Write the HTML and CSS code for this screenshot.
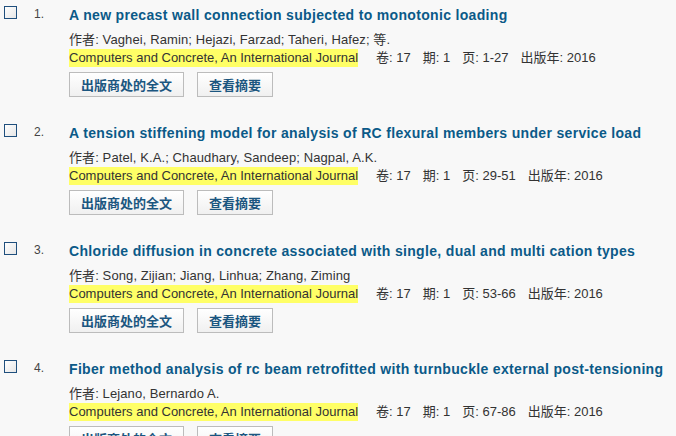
FILE: index.html
```html
<!DOCTYPE html>
<html lang="zh">
<head>
<meta charset="utf-8">
<title>Results</title>
<link rel="stylesheet" href="styles.css">
</head>
<body>
<ul class="results">
  <li class="item">
    <span class="box"></span>
    <span class="num">1.</span>
    <div class="body">
      <a class="title" href="#">A new precast wall connection subjected to monotonic loading</a>
      <div class="authors">作者: Vaghei, Ramin; Hejazi, Farzad; Taheri, Hafez; 等.</div>
      <div class="source"><span class="journal">Computers and Concrete, An International Journal</span><span class="meta">卷: 17</span><span class="meta">期: 1</span><span class="meta">页: 1-27</span><span class="meta">出版年: 2016</span></div>
      <div class="actions"><button class="btn">出版商处的全文</button><button class="btn">查看摘要</button></div>
    </div>
  </li>
  <li class="item">
    <span class="box"></span>
    <span class="num">2.</span>
    <div class="body">
      <a class="title" href="#">A tension stiffening model for analysis of RC flexural members under service load</a>
      <div class="authors">作者: Patel, K.A.; Chaudhary, Sandeep; Nagpal, A.K.</div>
      <div class="source"><span class="journal">Computers and Concrete, An International Journal</span><span class="meta">卷: 17</span><span class="meta">期: 1</span><span class="meta">页: 29-51</span><span class="meta">出版年: 2016</span></div>
      <div class="actions"><button class="btn">出版商处的全文</button><button class="btn">查看摘要</button></div>
    </div>
  </li>
  <li class="item">
    <span class="box"></span>
    <span class="num">3.</span>
    <div class="body">
      <a class="title" href="#">Chloride diffusion in concrete associated with single, dual and multi cation types</a>
      <div class="authors">作者: Song, Zijian; Jiang, Linhua; Zhang, Ziming</div>
      <div class="source"><span class="journal">Computers and Concrete, An International Journal</span><span class="meta">卷: 17</span><span class="meta">期: 1</span><span class="meta">页: 53-66</span><span class="meta">出版年: 2016</span></div>
      <div class="actions"><button class="btn">出版商处的全文</button><button class="btn">查看摘要</button></div>
    </div>
  </li>
  <li class="item">
    <span class="box"></span>
    <span class="num">4.</span>
    <div class="body">
      <a class="title" href="#">Fiber method analysis of rc beam retrofitted with turnbuckle external post-tensioning</a>
      <div class="authors">作者: Lejano, Bernardo A.</div>
      <div class="source"><span class="journal">Computers and Concrete, An International Journal</span><span class="meta">卷: 17</span><span class="meta">期: 1</span><span class="meta">页: 67-86</span><span class="meta">出版年: 2016</span></div>
      <div class="actions"><button class="btn">出版商处的全文</button><button class="btn">查看摘要</button></div>
    </div>
  </li>
</ul>
</body>
</html>
```
FILE: styles.css
```css
html, body {
  margin: 0;
  padding: 0;
  background: #f8f8f8;
  overflow: hidden;
}
body {
  font-family: "Liberation Sans", Arial, "Noto Sans CJK SC", sans-serif;
  color: #333;
  font-size: 13px;
}
.results {
  list-style: none;
  margin: 0;
  padding: 0;
}
.item {
  display: grid;
  grid-template-columns: 30px 35px 1fr;
  align-items: start;
  padding: 5px 0 21px 4px;
}
.box {
  width: 11px;
  height: 11px;
  margin-top: 1px;
  border: 1px solid #1f4f7d;
  background: linear-gradient(135deg, #ffffff 0%, #e6e6e6 100%);
}
.num {
  font-size: 12px;
  line-height: 18px;
  color: #444;
}
.body {
  display: flex;
  flex-direction: column;
  align-items: flex-start;
  white-space: nowrap;
}
.title {
  font-weight: bold;
  font-size: 14px;
  line-height: 20px;
  letter-spacing: 0.33px;
  color: #0b5a88;
  text-decoration: none;
}
.authors {
  margin-top: 5px;
  line-height: 19px;
  letter-spacing: 0.1px;
}
.source {
  display: flex;
  line-height: 18px;
}
.journal {
  background: #ffff66;
  margin-right: 18px;
}
.meta {
  margin-right: 12px;
}
.actions {
  display: flex;
  gap: 13px;
  margin-top: 5px;
}
.btn {
  height: 25px;
  padding: 0 11px;
  border: 1px solid #bcbcbc;
  background: linear-gradient(#ffffff, #f0f0f0);
  font-family: "Noto Sans CJK SC", sans-serif;
  font-weight: bold;
  font-size: 13px;
  color: #1b5680;
  line-height: 23px;
}
```
